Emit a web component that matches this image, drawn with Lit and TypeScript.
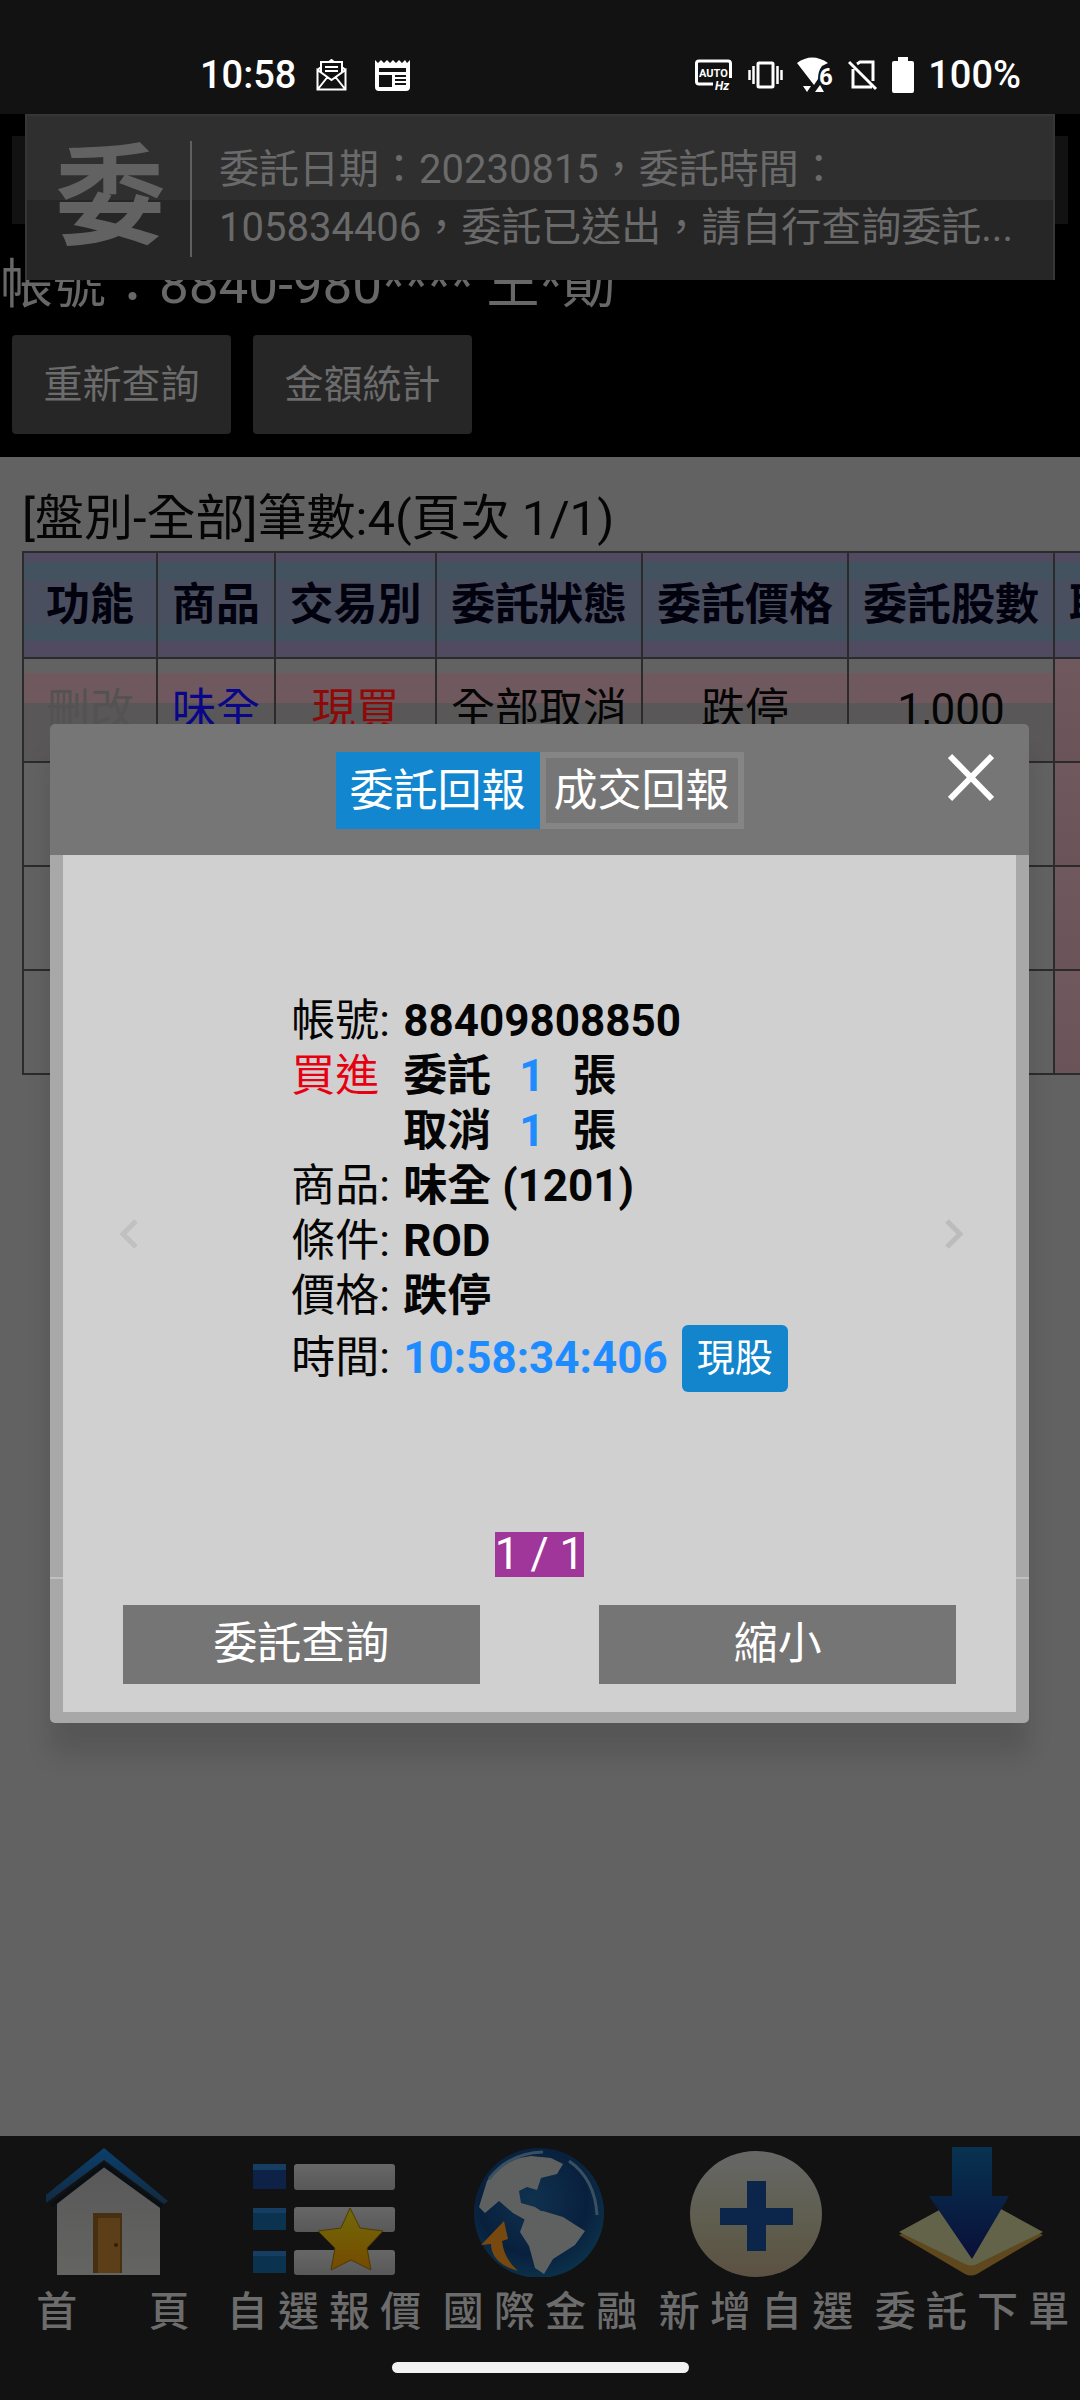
import { LitElement, html, css, svg } from "lit";
import { customElement, property, state } from "lit/decorators.js";
import { classMap } from "lit/directives/class-map.js";

const baseFont = css`
  :host {
    font-family: Roboto, "Noto Sans CJK TC", sans-serif;
  }
  *,
  *::before,
  *::after {
    box-sizing: border-box;
  }
  button {
    font-family: inherit;
    margin: 0;
    padding: 0;
    border: 0;
    cursor: pointer;
  }
`;

@customElement("status-bar")
class StatusBar extends LitElement {
  static styles = [
    baseFont,
    css`
      :host {
        display: block;
        background: #121212;
        color: #fff;
      }
      .bar {
        display: flex;
        justify-content: space-between;
        align-items: center;
        height: 114px;
        padding: 36px 59px 0 200px;
      }
      .side {
        display: flex;
        align-items: center;
      }
      .left {
        gap: 20px;
      }
      .right {
        gap: 14px;
      }
      .label {
        font-size: 38px;
        font-weight: 500;
        line-height: 48px;
      }
      .tray {
        display: flex;
        gap: 28px;
      }
      svg {
        display: block;
      }
      .tiny {
        font-size: 11px;
        font-weight: 700;
      }
      .hz {
        font-size: 12px;
        font-weight: 700;
        font-style: italic;
      }
      .six {
        font-size: 24px;
        font-weight: 700;
      }
    `,
  ];

  render() {
    return html`
      <header class="bar">
        <div class="side left">
          <span class="label">10:58</span>
          <div class="tray">
            <svg width="31" height="32" viewBox="0 0 31 32" fill="none" stroke="#fff" stroke-width="2">
              <path d="M5 13V3h21v10M1.500 11v19.500h28V11L15.500 21ZM2 30l9.500-12M29 30l-9.500-12M5 8l-3.500 3M26 8l3.500 3M9 8h13M9 12h13M13 3l2.500-2L18 3" />
            </svg>
            <svg width="35" height="32" viewBox="0 0 35 32">
              <path fill="#fff" d="M0 1l3 3 3-3 3 3 3-3 3 3 3-3 3 3 3-3 3 3 3-3 2 3 3-3v27q0 4-4 4H4q-4 0-4-4Z" />
              <path fill="#121212" d="M4 9h27v4H4zM4 16h13v12H4zM20 16h11v2H20zM20 20h11v2H20zM20 24h11v2H20z" />
            </svg>
          </div>
        </div>
        <div class="side right">
          <svg width="39" height="36" viewBox="0 0 39 36">
            <path d="M18 27H4q-2.500 0-2.500-2.500V6.500Q1.500 4 4 4h29q2.500 0 2.500 2.500V21" fill="none" stroke="#fff" stroke-width="3" />
            <text class="tiny" x="4" y="20" fill="#fff">AUTO</text>
            <text class="hz" x="20" y="33" fill="#fff">Hz</text>
          </svg>
          <svg width="35" height="28" viewBox="0 0 35 28" fill="none" stroke="#fff">
            <rect x="10" y="2" width="15" height="24" rx="1" stroke-width="3" />
            <path d="M5.500 5v18M29.500 5v18M1.500 9v10M33.500 9v10" stroke-width="2.500" />
          </svg>
          <svg width="37" height="36" viewBox="0 0 37 36" fill="#fff">
            <path d="M0 6Q15-5 31 6L25 9Q21 14 21 22L17 28Z" />
            <text class="six" x="22" y="28">6</text>
            <path d="M6 29h8l-4 6zM18 35h9l-4-7z" />
          </svg>
          <svg width="30" height="31" viewBox="0 0 30 31" fill="none" stroke="#fff" stroke-width="3">
            <path d="M1 2l27 27M5 9v18h19M9 4l3-2h13v19" />
          </svg>
          <svg width="22" height="36" viewBox="0 0 22 36" fill="#fff">
            <path d="M6 0h10v4h4q2 0 2 2v28q0 2-2 2H2q-2 0-2-2V6q0-2 2-2h4Z" />
          </svg>
          <span class="label">100%</span>
        </div>
      </header>
    `;
  }
}

@customElement("order-table")
class OrderTable extends LitElement {
  private columns = ["功能", "商品", "交易別", "委託狀態", "委託價格", "委託股數", "取消股數"];
  private rows = [["刪改", "味全", "現買", "全部取消", "跌停", "1,000", ""], [], [], []];

  static styles = [
    baseFont,
    css`
      :host {
        display: block;
        overflow: hidden;
        color: #050505;
      }
      .title {
        margin: 0;
        font-size: 49px;
        font-weight: 400;
        line-height: 64px;
        white-space: nowrap;
      }
      table {
        table-layout: fixed;
        width: 1236px;
        border-collapse: collapse;
        font-size: 44px;
        line-height: 56px;
      }
      .w1 { width: 134px; }
      .w2 { width: 118px; }
      .w3 { width: 161px; }
      .w4 { width: 206px; }
      th,
      td {
        padding: 0;
        border: 2px solid #2b2b2d;
        text-align: center;
        white-space: nowrap;
      }
      th {
        height: 106px;
        background: linear-gradient(#504b60 0 9px, #42535f 9px 27px, #4a4f60 27px 72px, #42535f 72px 88px, #504b60 88px);
        color: #02020f;
        font-weight: 700;
      }
      td {
        height: 104px;
        background: #626262;
      }
      tr.first td {
        background: linear-gradient(#626262 0 14px, #70595e 14px 44px, #595758 44px);
      }
      td.edge,
      tr.first td.edge {
        background: linear-gradient(#70595e, #6b5459);
      }
      .off { color: #535353; }
      .stock { color: #0a0688; }
      .side { color: #8d0a08; }
    `,
  ];

  render() {
    const widths = ["w1", "w2", "w3", "w4", "w4", "w4", "w4"];
    const tones = ["off", "stock", "side", "", "", "", "edge"];
    return html`
      <h2 class="title">[盤別-全部]筆數:4(頁次 1/1)</h2>
      <table>
        <colgroup>${widths.map((w) => html`<col class=${w} />`)}</colgroup>
        <thead>
          <tr>${this.columns.map((c) => html`<th scope="col">${c}</th>`)}</tr>
        </thead>
        <tbody>
          ${this.rows.map(
            (row, i) => html`<tr class=${i === 0 ? "first" : ""}>
              ${tones.map((tone, c) => html`<td class=${tone}>${row[c] ?? ""}</td>`)}
            </tr>`
          )}
        </tbody>
      </table>
    `;
  }
}

@customElement("report-dialog")
class ReportDialog extends LitElement {
  @state() private tab = 0;

  static styles = [
    baseFont,
    css`
      :host {
        display: block;
        border-radius: 5px;
        box-shadow: 0 32px 24px 0 rgba(0, 0, 0, 0.12);
        font-size: 44px;
        color: #050505;
      }
      .head {
        display: grid;
        grid-template-columns: 1fr auto 1fr;
        align-items: start;
        height: 131px;
        padding: 28px 35px 0;
        border-radius: 5px 5px 0 0;
        background: #767676;
      }
      .tabs {
        grid-column: 2;
        display: flex;
      }
      .tab {
        height: 77px;
        padding: 0 8px;
        border: 6px solid #858585;
        background: #767676;
        color: #fff;
        font-size: 44px;
        line-height: 60px;
      }
      .tab.on {
        border-color: #1287cf;
        background: #1287cf;
      }
      .close {
        justify-self: end;
        background: none;
      }
      svg {
        display: block;
      }
      .frame {
        padding: 0 13px 11px;
        border-radius: 0 0 5px 5px;
        background: linear-gradient(#a8a8a8 0 722px, #c0c0c0 722px 724px, #a8a8a8 724px);
      }
      .body {
        padding-bottom: 28px;
        background: #d0d0d0;
      }
      .slide {
        display: flex;
        justify-content: space-between;
        align-items: center;
        height: 677px;
        padding: 0 52px 0 56px;
      }
      .step {
        margin-top: 80px;
        background: none;
      }
      .next {
        padding-left: 4px;
      }
      .facts {
        display: grid;
        grid-template-columns: 112px auto;
        margin: 0;
        line-height: 55px;
      }
      dt,
      dd {
        margin: 0;
        white-space: nowrap;
      }
      dd {
        font-weight: 700;
      }
      .buy {
        color: #e60012;
      }
      .qty {
        display: flex;
        gap: 28px;
      }
      .blue {
        color: #1e8cff;
      }
      .tall {
        display: flex;
        align-items: center;
        gap: 14px;
        height: 70px;
      }
      .badge {
        padding: 0 15px;
        border-radius: 6px;
        background: #1385cc;
        color: #fff;
        font-size: 38px;
        font-weight: 400;
        line-height: 67px;
      }
      .pager {
        display: block;
        width: fit-content;
        margin: 0 auto 28px;
        background: #a0359a;
        color: #fff;
        line-height: 45px;
      }
      .actions {
        display: flex;
        justify-content: space-around;
      }
      .action {
        width: 37.5%;
        background: #757575;
        color: #fff;
        font-size: 44px;
        line-height: 79px;
      }
    `,
  ];

  private qty(label: string, n: number) {
    return html`<dd class="qty"><span>${label}</span><span class="blue">${n}</span><span>張</span></dd>`;
  }

  render() {
    return html`
      <div class="head">
        <div class="tabs" role="tablist">
          ${["委託回報", "成交回報"].map(
            (name, i) => html`<button
              role="tab"
              class=${classMap({ tab: true, on: i === this.tab })}
              aria-selected=${i === this.tab}
              @click=${() => (this.tab = i)}
            >${name}</button>`
          )}
        </div>
        <button class="close" aria-label="關閉">
          <svg width="46" height="50" viewBox="0 0 46 50" stroke="#fff" stroke-width="6">
            <path d="M2 4l42 43M44 4L2 47" />
          </svg>
        </button>
      </div>
      <div class="frame">
        <div class="body">
          <div class="slide">
            <button class="step" aria-label="上一筆">
              <svg width="20" height="32" viewBox="0 0 20 32" fill="none" stroke="#c0c0c0" stroke-width="5">
                <path d="M17 3L4 16l13 13" />
              </svg>
            </button>
            <dl class="facts">
              <dt>帳號:</dt>
              <dd>88409808850</dd>
              <dt class="buy">買進</dt>
              ${this.qty("委託", 1)}
              <dt></dt>
              ${this.qty("取消", 1)}
              <dt>商品:</dt>
              <dd>味全 (1201)</dd>
              <dt>條件:</dt>
              <dd>ROD</dd>
              <dt>價格:</dt>
              <dd>跌停</dd>
              <dt class="tall">時間:</dt>
              <dd class="tall"><span class="blue">10:58:34:406</span><span class="badge">現股</span></dd>
            </dl>
            <button class="step next" aria-label="下一筆">
              <svg width="20" height="32" viewBox="0 0 20 32" fill="none" stroke="#bcbcbc" stroke-width="5">
                <path d="M3 3l13 13L3 29" />
              </svg>
            </button>
          </div>
          <span class="pager">1 / 1</span>
          <div class="actions">
            <button class="action">委託查詢</button>
            <button class="action">縮小</button>
          </div>
        </div>
      </div>
    `;
  }
}

const navIcons = {
  home: svg`
    <defs>
      <linearGradient id="wall" x1="0" y1="0" x2="0" y2="1"><stop offset="0" stop-color="#585858" /><stop offset="1" stop-color="#646463" /></linearGradient>
      <linearGradient id="roof" x1="0" y1="0" x2="0" y2="1"><stop offset="0" stop-color="#0b3f6c" /><stop offset="1" stop-color="#122a40" /></linearGradient>
    </defs>
    <path fill="url(#wall)" d="M24 128V56L71 16l56 42v70Z" />
    <path fill="none" stroke="#0a0f14" stroke-width="4" d="M18 59L71 18l58 42" />
    <path fill="url(#roof)" d="M71 1L13 48v8l58-43 60 44 4-3Z" />
    <path fill="#46300f" d="M60 66h29v60H60z" />
    <path fill="#5c3f18" d="M65 71h22v55H65z" />
    <circle cx="83" cy="98" r="2" fill="#33200a" />
  `,
  list: svg`
    <defs>
      <linearGradient id="bar" x1="0" y1="0" x2="0" y2="1"><stop offset="0" stop-color="#676767" /><stop offset="1" stop-color="#585858" /></linearGradient>
      <linearGradient id="star" x1="0" y1="0" x2="0" y2="1"><stop offset="0" stop-color="#726a08" /><stop offset="1" stop-color="#754a00" /></linearGradient>
    </defs>
    <path fill="#0e2146" d="M4 17h33v25H4z" />
    <path fill="#0b3350" d="M4 61h33v22H4zM4 104h33v22H4z" />
    <path fill="#163d62" d="M4 17h33v6H4zM4 61h33v5H4zM4 104h33v5H4z" />
    <rect x="45" y="17" width="101" height="26" rx="3" fill="url(#bar)" />
    <rect x="45" y="60" width="101" height="25" rx="3" fill="url(#bar)" />
    <rect x="45" y="103" width="101" height="25" rx="3" fill="url(#bar)" />
    <path fill="url(#star)" stroke="#4b3a04" stroke-width="1" d="M101 61l10 20 23 3-16 17 4 22-20-10-20 10 4-22-17-17 23-3Z" />
  `,
  globe: svg`
    <defs>
      <radialGradient id="sea" cx=".45" cy=".4" r=".6"><stop offset="0" stop-color="#10324f" /><stop offset=".7" stop-color="#08203e" /><stop offset="1" stop-color="#0b304a" /></radialGradient>
    </defs>
    <circle cx="74" cy="66" r="65" fill="url(#sea)" />
    <path fill="#5f6161" d="M22 34Q38 12 66 9l20 2 12 6-6 10-16 4-4 12-10-3-8 4 2 12 14 4 12 8-4 10-12-2-18-10-14-12-14 12-6-6Z" />
    <path fill="#5f6161" d="M62 66l16-2 20 6 22 14-10 14-22 14-9 15-9-6-6-22-9-14Z" />
    <path fill="none" stroke="#38505f" stroke-width="3" d="M104 14q26 18 28 54M24 32Q44 6 78 5" />
    <path fill="#78490e" d="M16 98l23-24 4 18-6 2q2 18 16 30Q26 116 26 97Z" />
  `,
  add: svg`
    <defs>
      <linearGradient id="disc" x1="0" y1="0" x2="0" y2="1"><stop offset="0" stop-color="#676767" /><stop offset=".6" stop-color="#5e5d4d" /><stop offset="1" stop-color="#5c5142" /></linearGradient>
    </defs>
    <ellipse cx="75" cy="67" rx="66" ry="63" fill="url(#disc)" />
    <path fill="#0b264a" d="M66 34h19v27h27v17H85v26H66V78H39V61h27Z" />
  `,
  order: svg`
    <defs>
      <linearGradient id="arrow" x1="0" y1="0" x2="0" y2="1"><stop offset="0" stop-color="#083350" /><stop offset="1" stop-color="#090f38" /></linearGradient>
    </defs>
    <path fill="#5f481d" d="M2 88l66-36q6-3 12 0l66 36-66 39q-6 3-12 0Z" />
    <path fill="#626349" d="M2 85l66-36q6-3 12 0l66 36-66 32q-6 3-12 0Z" />
    <path fill="url(#arrow)" d="M55 0h40v49h17L75 112 32 49h23Z" />
  `,
};

type IconName = keyof typeof navIcons;

@customElement("bottom-nav")
class BottomNav extends LitElement {
  @property({ attribute: false }) items: { icon: IconName; label: string }[] = [
    { icon: "home", label: " 首  　 頁" },
    { icon: "list", label: "自 選 報 價" },
    { icon: "globe", label: "國 際 金 融" },
    { icon: "add", label: "新 增 自 選" },
    { icon: "order", label: "委 託 下 單" },
  ];

  static styles = [
    baseFont,
    css`
      :host {
        display: block;
        background: #121212;
      }
      .nav {
        display: grid;
        grid-template-columns: repeat(5, 1fr);
        padding-top: 11px;
      }
      .item {
        display: flex;
        flex-direction: column;
        align-items: center;
        gap: 11px;
        color: #6c6c6c;
        text-decoration: none;
        font-size: 41px;
        font-weight: 500;
        line-height: 48px;
        white-space: pre;
      }
      svg {
        display: block;
      }
      .home-bar {
        width: 297px;
        height: 11px;
        margin: 26px auto 0;
        border-radius: 6px;
        background: #f2f2f2;
      }
      .foot {
        padding-bottom: 27px;
      }
    `,
  ];

  render() {
    return html`
      <nav class="nav">
        ${this.items.map(
          (item) => html`<a class="item" href="#${item.icon}"><svg width="150" height="130" viewBox="0 0 150 130">${navIcons[item.icon]}</svg><span>${item.label}</span></a>`
        )}
      </nav>
      <div class="foot"><div class="home-bar"></div></div>
    `;
  }
}

@customElement("app-root")
class AppRoot extends LitElement {
  static styles = [
    baseFont,
    css`
      :host {
        display: flex;
        flex-direction: column;
        position: relative;
        min-height: 100vh;
        overflow: hidden;
        background: #626262;
      }
      .top {
        padding: 22px 12px 23px;
        background: #000;
      }
      .strip {
        height: 88px;
        background: #121212;
      }
      .account {
        margin: 31px -12px 20px;
        color: #686868;
        font-size: 53px;
        line-height: 60px;
        white-space: nowrap;
      }
      .tools {
        display: flex;
        gap: 22px;
      }
      .tool {
        width: 219px;
        height: 99px;
        border-radius: 4px;
        background: #262626;
        color: #6c6c6c;
        font-size: 39px;
        line-height: 48px;
      }
      .orders {
        flex: 1;
        padding: 30px 0 0 22px;
      }
      .toast {
        position: absolute;
        top: 114px;
        left: 25px;
        right: 25px;
        display: flex;
        align-items: center;
        height: 166px;
        padding: 2px 28px 0;
        border: solid #363636;
        border-width: 2px 2px 0;
        background: linear-gradient(#2f2f2f 0 84px, #262626 84px);
        color: #6a6a6a;
      }
      .mark {
        padding-right: 25px;
        border-right: 2px solid #606060;
        color: #626262;
        font-size: 110px;
        font-weight: 700;
        line-height: 116px;
      }
      .message {
        flex: 1;
        display: -webkit-box;
        -webkit-box-orient: vertical;
        -webkit-line-clamp: 2;
        overflow: hidden;
        margin: 0 0 0 27px;
        font-size: 40px;
        line-height: 58px;
      }
      .dialog {
        position: absolute;
        top: 724px;
        left: 50px;
        right: 51px;
      }
    `,
  ];

  render() {
    return html`
      <status-bar></status-bar>
      <section class="top">
        <div class="strip"></div>
        <p class="account">帳號：8840-980**** 王*勛</p>
        <div class="tools">
          <button class="tool">重新查詢</button>
          <button class="tool">金額統計</button>
        </div>
      </section>
      <main class="orders"><order-table></order-table></main>
      <bottom-nav></bottom-nav>
      <aside class="toast" role="status">
        <span class="mark">委</span>
        <p class="message">委託日期：20230815，委託時間：<br />105834406，委託已送出，請自行查詢委託...</p>
      </aside>
      <report-dialog class="dialog" role="dialog"></report-dialog>
    `;
  }
}
